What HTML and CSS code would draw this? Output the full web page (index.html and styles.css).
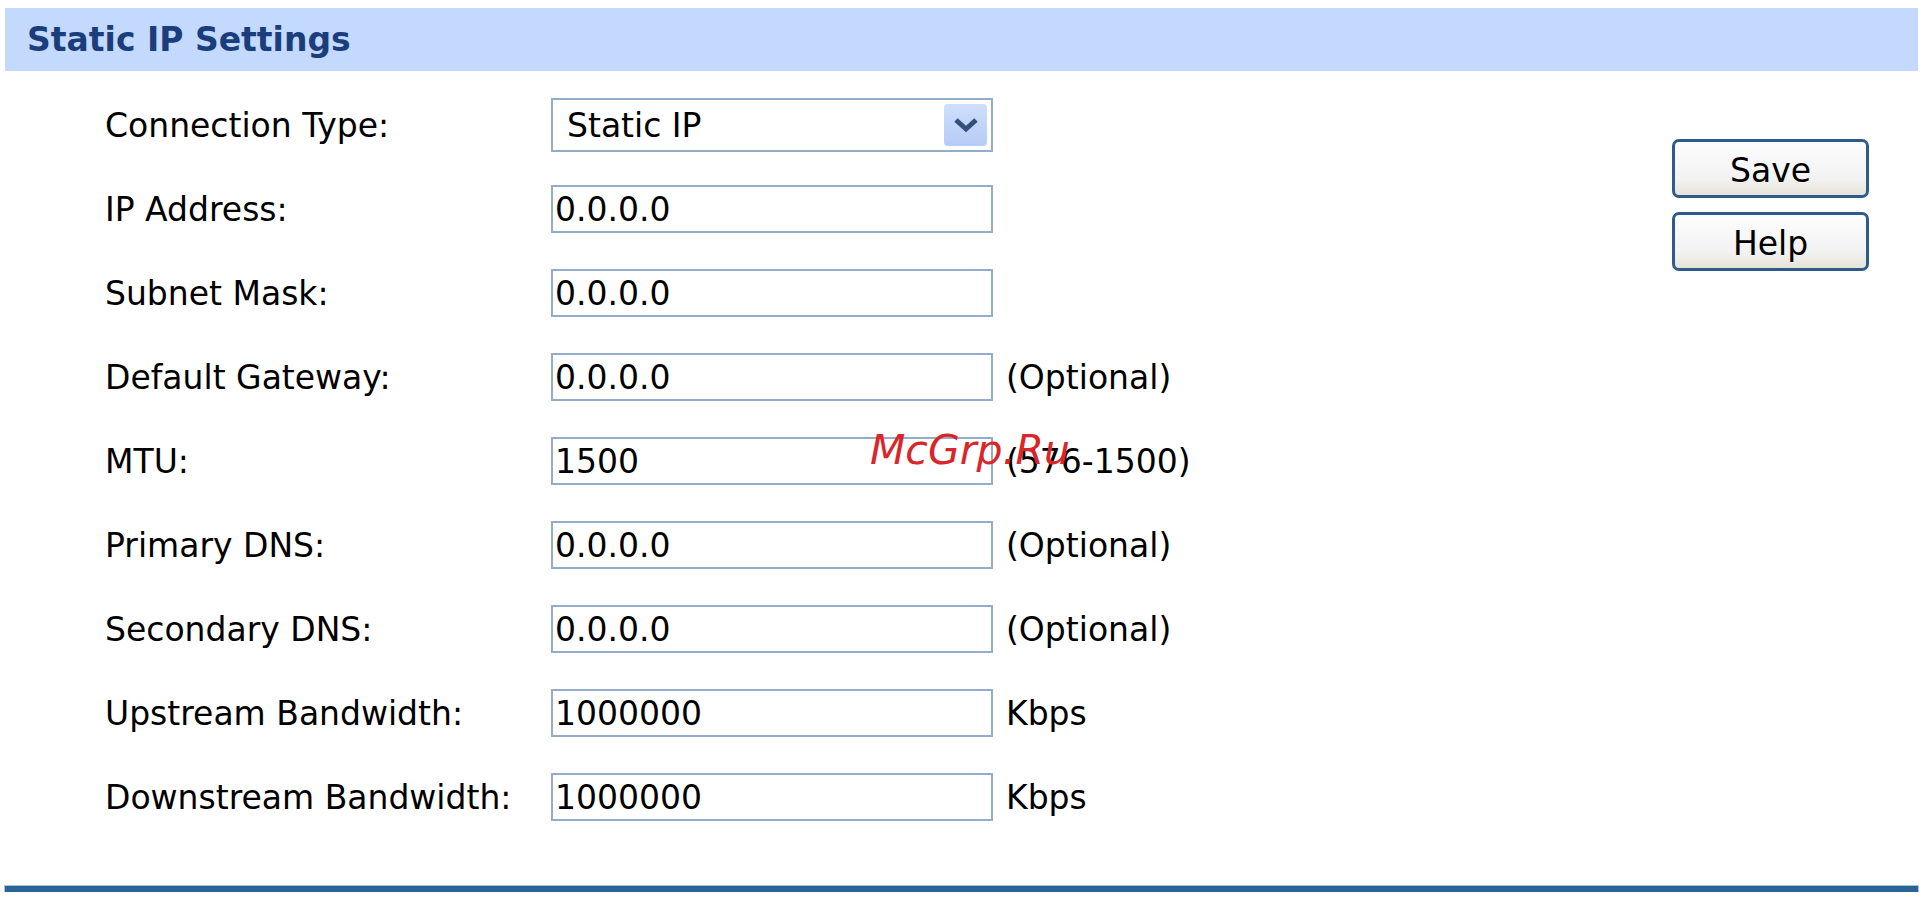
FILE: index.html
```html
<!DOCTYPE html>
<html lang="en">
<head>
  <meta charset="UTF-8" />
  <title>Static IP Settings</title>
  <link rel="stylesheet" href="styles.css">
</head>
<body>
  <div class="title-bar">Static IP Settings</div>

  <div class="panel">
    <div class="form">
      <div class="row">
        <label for="connType">Connection Type:</label>
        <div class="select-wrap">
          <select id="connType">
            <option>Static IP</option>
            <option>Dynamic IP</option>
            <option>PPPoE</option>
          </select>
          <span class="select-btn">
            <svg width="26" height="16" viewBox="0 0 26 16">
              <path d="M3 3 L13 12 L23 3" fill="none" stroke="#33507d" stroke-width="5" stroke-linejoin="miter"/>
            </svg>
          </span>
        </div>
      </div>

      <div class="row">
        <label for="ipAddr">IP Address:</label>
        <input type="text" id="ipAddr" value="0.0.0.0" />
      </div>

      <div class="row">
        <label for="mask">Subnet Mask:</label>
        <input type="text" id="mask" value="0.0.0.0" />
      </div>

      <div class="row">
        <label for="gateway">Default Gateway:</label>
        <input type="text" id="gateway" value="0.0.0.0" />
        <span class="note">(Optional)</span>
      </div>

      <div class="row">
        <label for="mtu">MTU:</label>
        <input type="text" id="mtu" value="1500" />
        <span class="note">(576-1500)</span>
      </div>

      <div class="row">
        <label for="dns1">Primary DNS:</label>
        <input type="text" id="dns1" value="0.0.0.0" />
        <span class="note">(Optional)</span>
      </div>

      <div class="row">
        <label for="dns2">Secondary DNS:</label>
        <input type="text" id="dns2" value="0.0.0.0" />
        <span class="note">(Optional)</span>
      </div>

      <div class="row">
        <label for="up">Upstream Bandwidth:</label>
        <input type="text" id="up" value="1000000" />
        <span class="note">Kbps</span>
      </div>

      <div class="row">
        <label for="down">Downstream Bandwidth:</label>
        <input type="text" id="down" value="1000000" />
        <span class="note">Kbps</span>
      </div>
    </div>

    <div class="actions">
      <button type="button">Save</button>
      <button type="button">Help</button>
    </div>

    <div class="watermark">McGrp.Ru</div>
  </div>

  <div class="bottom-line"></div>
</body>
</html>
```

FILE: styles.css
```css
body {
  margin: 0;
  background: #fff;
  font-family: 'DejaVu Sans', Verdana, sans-serif;
  font-size: 33px;
  color: #000;
}
.title-bar {
  margin: 8px 10px 0 5px;
  height: 63px;
  line-height: 63px;
  padding-left: 22px;
  background: #c3d9fe;
  color: #1b3d7c;
  font-weight: bold;
}
.panel {
  position: relative;
  display: flex;
  margin-top: 12px;
  padding-left: 105px;
}
.form {
  display: flex;
  flex-direction: column;
}
.row {
  display: flex;
  align-items: center;
  height: 84px;
}
.row label {
  width: 446px;
  flex-shrink: 0;
}
.row input {
  box-sizing: border-box;
  width: 442px;
  height: 48px;
  padding: 0 2px;
  border: 2px solid #92acc9;
  font-family: 'DejaVu Sans', Verdana, sans-serif;
  font-size: 33px;
  color: #000;
  background: #fff;
  outline: none;
}
.select-wrap {
  position: relative;
  width: 442px;
  height: 54px;
}
.select-wrap select {
  box-sizing: border-box;
  width: 100%;
  height: 100%;
  padding: 0 0 0 14px;
  border: 2px solid #92acc9;
  background: #fff;
  font-family: 'DejaVu Sans', Verdana, sans-serif;
  font-size: 33px;
  color: #000;
  appearance: none;
  -webkit-appearance: none;
  border-radius: 0;
  outline: none;
}
.select-btn {
  position: absolute;
  top: 6px;
  right: 6px;
  width: 43px;
  height: 42px;
  border-radius: 4px;
  background: linear-gradient(#cfdffb, #b5ccf6);
  display: flex;
  align-items: center;
  justify-content: center;
  pointer-events: none;
}
.note {
  margin-left: 13px;
  white-space: nowrap;
}
.actions {
  display: flex;
  flex-direction: column;
  gap: 14px;
  margin: 56px 59px 0 auto;
}
.actions button {
  width: 197px;
  height: 59px;
  padding: 3px 0 0;
  border: 3px solid #2d5b8e;
  border-radius: 7px;
  background: linear-gradient(#fdfdfd, #f2f2f2 70%, #e6e3d6);
  font-family: 'DejaVu Sans', Verdana, sans-serif;
  font-size: 33px;
  color: #000;
  cursor: pointer;
}
.watermark {
  position: absolute;
  left: 870px;
  top: 343px;
  color: #d9262a;
  font-style: italic;
  font-size: 41px;
  pointer-events: none;
}
.bottom-line {
  margin: 47px 10px 0 5px;
  height: 6px;
  background: #2a6496;
  box-shadow: 0 0 0 1px #a9c3db;
}
```
